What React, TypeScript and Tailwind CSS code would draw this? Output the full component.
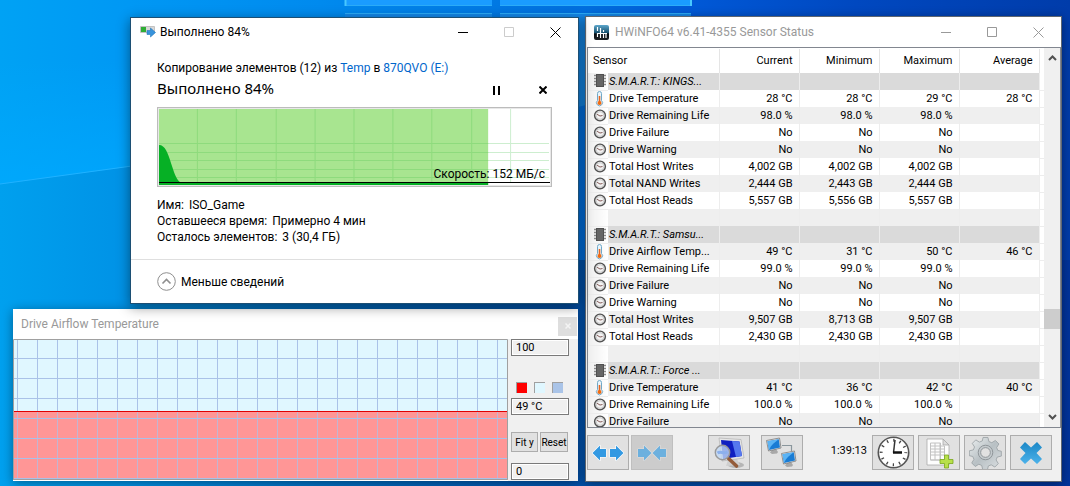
import type { ReactNode } from 'react';

type Row = {
  kind: 'group' | 'temp' | 'clock' | 'blank';
  name?: string;
  values?: string[];
};

const rows: Row[] = [
  { kind: 'group', name: 'S.M.A.R.T.: KINGS...' },
  { kind: 'temp', name: 'Drive Temperature', values: ['28 °C', '28 °C', '29 °C', '28 °C'] },
  { kind: 'clock', name: 'Drive Remaining Life', values: ['98.0 %', '98.0 %', '98.0 %'] },
  { kind: 'clock', name: 'Drive Failure', values: ['No', 'No', 'No'] },
  { kind: 'clock', name: 'Drive Warning', values: ['No', 'No', 'No'] },
  { kind: 'clock', name: 'Total Host Writes', values: ['4,002 GB', '4,002 GB', '4,002 GB'] },
  { kind: 'clock', name: 'Total NAND Writes', values: ['2,444 GB', '2,443 GB', '2,444 GB'] },
  { kind: 'clock', name: 'Total Host Reads', values: ['5,557 GB', '5,556 GB', '5,557 GB'] },
  { kind: 'blank' },
  { kind: 'group', name: 'S.M.A.R.T.: Samsu...' },
  { kind: 'temp', name: 'Drive Airflow Temp...', values: ['49 °C', '31 °C', '50 °C', '46 °C'] },
  { kind: 'clock', name: 'Drive Remaining Life', values: ['99.0 %', '99.0 %', '99.0 %'] },
  { kind: 'clock', name: 'Drive Failure', values: ['No', 'No', 'No'] },
  { kind: 'clock', name: 'Drive Warning', values: ['No', 'No', 'No'] },
  { kind: 'clock', name: 'Total Host Writes', values: ['9,507 GB', '8,713 GB', '9,507 GB'] },
  { kind: 'clock', name: 'Total Host Reads', values: ['2,430 GB', '2,430 GB', '2,430 GB'] },
  { kind: 'blank' },
  { kind: 'group', name: 'S.M.A.R.T.: Force ...' },
  { kind: 'temp', name: 'Drive Temperature', values: ['41 °C', '36 °C', '42 °C', '40 °C'] },
  { kind: 'clock', name: 'Drive Remaining Life', values: ['100.0 %', '100.0 %', '100.0 %'] },
  { kind: 'clock', name: 'Drive Failure', values: ['No', 'No', 'No'] },
];

const columns = ['Current', 'Minimum', 'Maximum', 'Average'];

const Wallpaper = () => (
  <svg className="absolute inset-0 h-full w-full" viewBox="0 0 1070 486" preserveAspectRatio="none" aria-hidden="true">
    <defs>
      <linearGradient id="sky" x1="0" y1="0" x2="1" y2="0">
        <stop offset="0" stopColor="#00a2f4" />
        <stop offset="0.12" stopColor="#0098f4" />
        <stop offset="0.3" stopColor="#008aee" />
        <stop offset="0.45" stopColor="#007ae4" />
        <stop offset="0.55" stopColor="#006ede" />
        <stop offset="0.65" stopColor="#0058d6" />
        <stop offset="0.8" stopColor="#0048c0" />
        <stop offset="1" stopColor="#003caa" />
      </linearGradient>
      <linearGradient id="floor" x1="0" y1="0" x2="1" y2="0">
        <stop offset="0" stopColor="#00a0ee" />
        <stop offset="0.12" stopColor="#0092e6" />
        <stop offset="0.3" stopColor="#0070c4" />
        <stop offset="0.54" stopColor="#0052ac" />
        <stop offset="1" stopColor="#00349c" />
      </linearGradient>
      <linearGradient id="beam" x1="0" y1="0" x2="0" y2="1">
        <stop offset="0" stopColor="#00aaff" stopOpacity="0" />
        <stop offset="1" stopColor="#00aaff" stopOpacity="0.7" />
      </linearGradient>
    </defs>
    <path d="M0 0h1070v486H0z" fill="url(#sky)" />
    <path d="M0 60h180v100L0 184z" fill="url(#beam)" />
    <path d="M0 184 180 160 500 260h570v226H0z" fill="url(#floor)" />
    <path d="m0 184 132-18" stroke="#20b2ff" />
    <path d="M345 0h147v6H345zM500 0h191v6H500z" fill="#1a9cff" />
    <path d="M345 13h147v6H345zM500 13h191v6H500z" fill="#1488ea" />
    <path d="M345 5.500h147M500 5.500h191M345 13.500h147M500 13.500h191" stroke="#2cacf8" />
    <path d="M345.500 0v6M691 0v6" stroke="#48c8ff" strokeWidth="2" />
    <path d="M578 17h8v88l-8 2z" fill="#1384e2" />
  </svg>
);

const WindowButtons = ({ muted = false }: { muted?: boolean }) => (
  <div className={`flex ${muted ? 'text-[#999999]' : 'text-black'}`}>
    <button type="button" aria-label="Minimize" className="flex h-7 w-[46px] items-center justify-center">
      <svg width="11" height="11" stroke="currentColor" fill="none"><path d="M0 5.5h10" /></svg>
    </button>
    <button
      type="button"
      aria-label="Maximize"
      className={`flex h-7 w-[46px] items-center justify-center ${muted ? '' : 'text-[#cccccc]'}`}
    >
      <svg width="11" height="11" stroke="currentColor" fill="none"><path d="M.5.5h9v9h-9z" /></svg>
    </button>
    <button type="button" aria-label="Close" className="flex h-7 w-[46px] items-center justify-center">
      <svg width="11" height="11" stroke="currentColor" fill="none"><path d="m.5.5 10 10m0-10-10 10" /></svg>
    </button>
  </div>
);

const SpeedChart = () => (
  <div className="relative border border-[#bcbcbc] bg-[#e8e8e8] p-px">
    <svg className="block h-[76px] w-full bg-white" viewBox="0 0 392 76" preserveAspectRatio="none" aria-hidden="true">
      <path
        d="M38.5 0v73M77.5 0v73M117.5 0v73M156.5 0v73M195.5 0v73M234.5 0v73M273.5 0v73M313.5 0v73M352.5 0v73M0 34.5h391M0 43.5h391M0 51.5h391M0 60.5h391M0 68.5h391"
        stroke="#cdeecf"
      />
      <path d="M0 0h330v76H0z" fill="#a8e590" />
      <path
        d="M38.5 0v73M77.5 0v73M117.5 0v73M156.5 0v73M195.5 0v73M234.5 0v73M273.5 0v73M313.5 0v73M0 34.5h330M0 43.5h330M0 51.5h330M0 60.5h330M0 68.5h330"
        stroke="#8edb7c"
      />
      <path d="M0 36c6 0 9 8 12 18 3 9 5 16 9 19H0z" fill="#06b025" />
      <path d="M0 73h330v3H0z" fill="#06b025" />
      <path d="M0 73.500h392" stroke="#000" />
    </svg>
    <span className="absolute right-1.5 bottom-1 text-xs leading-4">Скорость: 152 МБ/с</span>
  </div>
);

const CopyDialog = () => (
  <section className="absolute top-[17px] left-[130px] flex w-[449px] flex-col border border-[#1c4f74] bg-white font-[Roboto,'Noto_Sans',sans-serif] text-xs text-black shadow-[0_3px_12px_rgba(0,0,0,0.45)]">
    <header className="flex h-7 items-center">
      <svg className="ml-[9px]" width="16" height="12" aria-hidden="true">
        <path d="M.5.5h14v6H.5z" fill="#d8d8d8" stroke="#c2c2c2" />
        <path d="M1 1h5v5H1z" fill="#2fae35" />
        <path d="M7 4.500h3.500V2l5 4.500-5 4.500V8.500H7z" fill="#3793dc" stroke="#2277bb" strokeWidth=".6" />
      </svg>
      <h1 className="ml-1 grow text-xs">Выполнено 84%</h1>
      <WindowButtons />
    </header>

    <div className="px-[26px] pt-3.5">
      <p className="leading-4">
        Копирование элементов (12) из{' '}
        <a href="#temp" className="text-[#0066cc]">Temp</a> в <a href="#drive" className="text-[#0066cc]">870QVO (E:)</a>
      </p>
      <div className="flex h-7 items-center">
        <h2 className="grow self-start font-['Noto_Sans',sans-serif] text-[15px] leading-6">Выполнено 84%</h2>
        <button type="button" aria-label="Пауза" className="flex h-6 w-[46px] items-center justify-center">
          <svg width="8" height="9" aria-hidden="true"><path d="M0 0h2v9H0zM5 0h2v9H5z" /></svg>
        </button>
        <button type="button" aria-label="Отмена" className="mr-[-14px] flex h-6 w-[46px] items-center justify-center">
          <svg width="8" height="8" aria-hidden="true"><path d="m.5.5 7 7m0-7-7 7" stroke="#000" strokeWidth="2" /></svg>
        </button>
      </div>
      <div className="mt-[3px]">
        <SpeedChart />
      </div>
      <dl className="mt-2.5 leading-4">
        <div className="flex gap-[5px]"><dt>Имя:</dt><dd>ISO_Game</dd></div>
        <div className="flex gap-[5px]"><dt>Оставшееся время:</dt><dd>Примерно 4 мин</dd></div>
        <div className="flex gap-[5px]"><dt>Осталось элементов:</dt><dd>3 (30,4 ГБ)</dd></div>
      </dl>
    </div>

    <footer className="mt-3.5 border-t border-[#dfdfdf] px-[26px] py-3">
      <button type="button" className="flex items-center gap-[5px]">
        <svg width="19" height="19" fill="none" stroke="#8e8e8e" aria-hidden="true">
          <circle cx="9.500" cy="9.500" r="8.800" />
          <path d="m5.500 11.500 4-4 4 4" strokeWidth="1.600" />
        </svg>
        Меньше сведений
      </button>
    </footer>
  </section>
);

const fieldClass = 'h-[17px] w-full border border-[#7a7a7a] bg-[#f0f0f0] px-1 shadow-[inset_0_0_0_1px_#fff]';

const AirflowWindow = () => (
  <section className="absolute top-[309px] left-[13px] w-[565px] bg-[#f0f0f0] font-[Roboto,'Noto_Sans',sans-serif] text-[11px] text-black shadow-[0_2px_10px_rgba(0,0,0,0.4)]">
    <header className="flex h-[30px] items-center justify-between bg-white pl-2">
      <h1 className="text-xs text-[#999999]">Drive Airflow Temperature</h1>
      <button type="button" aria-label="Close" className="mt-1 mr-px flex h-[19px] w-[19px] items-center justify-center bg-[#dedede] text-[#f4f4f4]">
        <svg width="6" height="6" stroke="currentColor" strokeWidth="1.500" aria-hidden="true"><path d="m.5.5 5 5m0-5-5 5" /></svg>
      </button>
    </header>
    <div className="flex">
      <svg className="block h-[142px] min-w-0 grow" viewBox="0 0 495 142" preserveAspectRatio="none" aria-hidden="true">
        <defs>
          <pattern id="grid-top" x="4" y="19" width="20" height="20" patternUnits="userSpaceOnUse">
            <path d="M.5 0v20M0 .5h20" stroke="#aac2e8" />
          </pattern>
          <pattern id="grid-low" x="4" y="19" width="20" height="20" patternUnits="userSpaceOnUse">
            <path d="M.5 0v20" stroke="#c4b4d0" />
            <path d="M0 .5h20" stroke="#a9c0e8" />
          </pattern>
        </defs>
        <path d="M0 0h495v142H0z" fill="#e0f7ff" />
        <path d="M0 0h495v72H0z" fill="url(#grid-top)" />
        <path d="M0 72h495v69H0z" fill="#ff9696" />
        <path d="M0 72h495v69H0z" fill="url(#grid-low)" />
        <path d="M0 72.500h495" stroke="#e00000" />
        <path d="M.5 141V.5h494v140H0" fill="none" stroke="#a0a0a0" />
        <path d="M0 141.500h495" stroke="#fff" />
      </svg>
      <div className="flex w-[70px] shrink-0 flex-col pr-[9px] pl-[3px]">
        <input aria-label="Maximum value" defaultValue="100" className={fieldClass} />
        <div className="mt-[26px] flex gap-[7px] pl-[5px]">
          <button type="button" aria-label="Line colour" className="size-[11px] border-t border-l border-[#a0a0a0] bg-[#ff0000]" />
          <button type="button" aria-label="Background colour" className="size-[11px] border-t border-l border-[#a0a0a0] bg-[#e0f7ff]" />
          <button type="button" aria-label="Grid colour" className="size-[11px] border-t border-l border-[#a0a0a0] bg-[#aac4e8]" />
        </div>
        <input aria-label="Current value" defaultValue="49 °C" className={`mt-[5px] ${fieldClass}`} />
        <div className="mt-[17px] flex gap-0.5">
          <button type="button" className="h-5 w-[27px] border border-[#adadad] bg-[#e1e1e1] text-[10px] whitespace-nowrap">Fit y</button>
          <button type="button" className="h-5 w-7 border border-[#adadad] bg-[#e1e1e1] text-[10px] whitespace-nowrap">
            <span className="-mx-1">Reset</span>
          </button>
        </div>
        <input aria-label="Minimum value" defaultValue="0" className={`mt-[11px] ${fieldClass}`} />
      </div>
    </div>
  </section>
);

const RowIcon = ({ kind }: { kind: Row['kind'] }) => {
  if (kind === 'blank') return null;
  return (
    <svg width="14" height="16" viewBox="0 0 14 16" className="block" aria-hidden="true">
      {kind === 'group' && (
        <>
          <path d="M1 2.500h12M1 5.500h12M1 8.500h12M1 11.500h12" stroke="#8a8a8a" strokeWidth="1.500" />
          <path d="M3 1h8v13H3z" fill="#505050" />
          <path d="M4 2h6v11H4z" fill="#666" />
        </>
      )}
      {kind === 'temp' && (
        <>
          <path d="M4.500 2.500a1.500 1.500 0 0 1 4 0v7a3 3 0 1 1-4 0z" fill="#e8f3fa" stroke="#70a8c8" />
          <path d="M6.500 5v7" stroke="#e8641e" strokeWidth="1.600" />
          <circle cx="6.500" cy="12" r="2" fill="#f06a10" />
        </>
      )}
      {kind === 'clock' && (
        <>
          <circle cx="7" cy="7.500" r="5.400" fill="#e8e8e8" stroke="#505050" strokeWidth="1.400" />
          <circle cx="7" cy="7.500" r="3.800" fill="#f3f3f3" stroke="#b4b4b4" strokeWidth=".6" />
          <path d="M4 6.300 7 8 9.500 7.500" fill="none" stroke="#774c48" strokeWidth=".9" />
        </>
      )}
    </svg>
  );
};

const rowBackground = (row: Row, index: number) => {
  if (row.kind === 'group') return 'bg-[#dadada]';
  return index % 2 === 0 ? 'bg-[#efefef]' : 'bg-white';
};

const SensorTable = () => (
  <div className="flex h-[381px] overflow-hidden border border-[#828790] bg-white">
    <div className="min-w-0 grow overflow-hidden pt-px">
      <table className="w-full table-fixed border-collapse">
        <colgroup>
          <col className="w-5" />
          <col className="w-[111px]" />
          <col className="w-20" />
          <col className="w-20" />
          <col className="w-20" />
          <col className="w-20" />
          <col />
        </colgroup>
        <thead>
          <tr className="h-6">
            <th colSpan={2} scope="col" className="border-r border-[#e5e5e5] p-0 pl-[5px] text-left font-normal">Sensor</th>
            {columns.map((column) => (
              <th key={column} scope="col" className="border-r border-[#e5e5e5] p-0 pr-1.5 text-right font-normal">{column}</th>
            ))}
            <td />
          </tr>
        </thead>
        <tbody>
          {rows.map((row, index) => (
            <tr key={index} className="h-[17px]">
              <td className="border-b border-[#ececec] bg-linear-to-r from-[#eeeeee] to-white p-0 pl-[5px]"><RowIcon kind={row.kind} /></td>
              <td className={`${rowBackground(row, index)} overflow-hidden border-r border-[#ededed] p-0 pl-px leading-4 whitespace-nowrap ${row.kind === 'group' ? 'italic' : ''}`}>
                {row.name}
              </td>
              {columns.map((column, i) => (
                <td key={column} className={`${rowBackground(row, index)} border-r border-[#ededed] p-0 pr-1.5 text-right leading-4 whitespace-nowrap`}>
                  {row.values?.[i]}
                </td>
              ))}
              <td className="border-b border-[#ededed] p-0" />
            </tr>
          ))}
        </tbody>
      </table>
    </div>
    <div className="flex w-4 shrink-0 flex-col items-center justify-between bg-[#f0f0f0]">
      <button type="button" aria-label="Scroll up" className="flex h-5 w-4 items-center justify-center">
        <svg width="9" height="6" fill="none" stroke="#505050" strokeWidth="2"><path d="m1 5 3.500-3.500L8 5" /></svg>
      </button>
      <div className="mt-[163px] h-5 w-4 bg-[#cdcdcd]" />
      <button type="button" aria-label="Scroll down" className="flex h-5 w-4 items-center justify-center">
        <svg width="9" height="6" fill="none" stroke="#505050" strokeWidth="2"><path d="m1 1 3.500 3.500L8 1" /></svg>
      </button>
    </div>
  </div>
);

const ToolButton = ({ label, disabled = false, children }: { label: string; disabled?: boolean; children: ReactNode }) => (
  <button
    type="button"
    aria-label={label}
    disabled={disabled}
    className={`flex h-[35px] w-[42px] items-center justify-center border ${disabled ? 'border-[#bfbfbf] bg-[#cccccc]' : 'border-[#adadad] bg-[#e1e1e1]'}`}
  >
    {children}
  </button>
);

const MonitorShape = () => (
  <>
    <path d="m6 12 4-1 2 3-1 1.500-5 .5-2-1.500z" fill="#a8a8a8" />
    <path d="m.5 2.500 13-2.500 1.500 10L2.500 13z" fill="#e8e8e8" stroke="#6c6c6c" strokeWidth=".7" />
    <path d="m1.500 3.300 11.300-2.100L14 9.500 3 11.900z" fill="#1a7cd4" />
    <path d="m1.500 3.300 11.300-2.100C9 4 5 7 3 11.900z" fill="#5cb4f4" />
  </>
);

const SensorToolbar = () => (
  <footer className="flex h-[53px] items-start pt-[7px] pr-[9px]">
    <div className="flex gap-0.5">
      <ToolButton label="Expand">
        <svg width="34" height="20" fill="#3399e2" stroke="#fff" strokeWidth="1.200" strokeLinejoin="round" className="[paint-order:stroke]">
          <path d="m1.500 10 7.500-7.500V6h6v8H9v3.500zM32.500 10 25 2.500V6h-6v8h6v3.500z" />
        </svg>
      </ToolButton>
      <ToolButton label="Collapse" disabled>
        <svg width="34" height="20" fill="#6cb0de" stroke="#ddd" strokeWidth="1.200" strokeLinejoin="round" className="[paint-order:stroke]">
          <path d="M16.500 10 9 2.500V6H3v8h6v3.500zM17.500 10 25 2.500V6h6v8h-6v3.500z" />
        </svg>
      </ToolButton>
    </div>
    <div className="ml-[35px] flex gap-[11px]">
      <ToolButton label="Summary">
        <svg width="34" height="33" viewBox="0 0 34 33">
          <ellipse cx="24" cy="29" rx="8" ry="3" fill="#b5b5b5" />
          <path d="m16 24 9-1 3 6-14 1z" fill="#cfcfcf" />
          <path d="m7 2 22 1.500L32 22 10 25z" fill="#e6e6e6" stroke="#aaa" strokeWidth=".6" />
          <path d="m9 4 18.500 1.500L30 20l-19 3z" fill="#101fc0" />
          <path d="m20 5 7.500.5L30 20l-6 1z" fill="#5578ee" />
          <path d="m16 22 8.500 8" stroke="#945c3a" strokeWidth="3.600" strokeLinecap="round" />
          <circle cx="10.500" cy="16.500" r="7.200" fill="#c0d8f4" fillOpacity=".8" stroke="#999" strokeWidth="1.400" />
          <path d="M5.500 17c3-2 6 1 10-1" stroke="#8cb0ec" strokeWidth="3" fill="none" />
        </svg>
      </ToolButton>
      <ToolButton label="Network">
        <svg width="34" height="32" viewBox="0 0 34 32">
          <path d="M17 8.500h9.500V14" stroke="#8a969c" strokeWidth="1.200" fill="none" />
          <g transform="translate(1 1)"><MonitorShape /></g>
          <g transform="translate(16 14)"><MonitorShape /></g>
        </svg>
      </ToolButton>
    </div>
    <time className="ml-auto self-start pt-2 pr-[5px] leading-4">1:39:13</time>
    <div className="flex gap-1">
      <ToolButton label="Reset clock">
        <svg width="33" height="33" viewBox="0 0 33 33" fill="none">
          <circle cx="16.500" cy="16.500" r="15.200" fill="#fff" stroke="#555" strokeWidth="1.600" />
          <circle cx="16.500" cy="16.500" r="12.300" stroke="#444" strokeWidth="3" strokeDasharray="1.300 5.140" strokeDashoffset=".65" />
          <path d="M16.500 16.500 18 4" stroke="#333" strokeWidth="1.500" />
          <path d="M16 16.500h9" stroke="#111" strokeWidth="2.500" />
        </svg>
      </ToolButton>
      <ToolButton label="Log">
        <svg width="30" height="32" viewBox="0 0 30 32">
          <path d="M3 2h16l6 6v20H3z" fill="#fdfdfd" stroke="#aaa" strokeWidth=".8" />
          <path d="M19 2v6h6z" fill="#ddd" stroke="#aaa" strokeWidth=".8" />
          <path d="M6.500 6h10v17h-10zM6.500 9h14v14h-14M6.500 12h14M6.500 15h14M6.500 18h14M11 6v17M16 6v17" fill="none" stroke="#c2c2c2" />
          <path d="M20.500 18h4v4.500H29v4h-4.500V31h-4v-4.500H16v-4h4.500z" fill="#b8e04b" stroke="#79a71c" strokeWidth=".8" />
        </svg>
      </ToolButton>
      <ToolButton label="Settings">
        <svg width="33" height="33" viewBox="-17 -17 34 34">
          <defs>
            <linearGradient id="steel" x1="0" y1="0" x2="1" y2="1">
              <stop offset="0" stopColor="#eef1f2" />
              <stop offset="0.5" stopColor="#b8c0c4" />
              <stop offset="1" stopColor="#dce0e2" />
            </linearGradient>
          </defs>
          <path
            d="M-2.500-15.500h5l1 4.200 3 1.200 3.700-2.300 3.600 3.600-2.300 3.700 1.200 3 3.600.8v5l-4.200 1-1.200 3 2.300 3.700-3.600 3.600-3.700-2.300-3 1.200-.8 3.600h-5l-1-4.200-3-1.200-3.700 2.300-3.600-3.600 2.300-3.700-1.200-3-3.600-.8v-5l4.200-1 1.200-3-2.300-3.700 3.600-3.600 3.700 2.300 3-1.200z"
            fill="url(#steel)"
            stroke="#949b9f"
            strokeWidth=".8"
          />
          <circle r="7.500" fill="#c4cacd" stroke="#8d9498" />
          <circle r="5" fill="#e1e1e1" stroke="#8d9498" />
        </svg>
      </ToolButton>
      <ToolButton label="Close sensors">
        <svg width="26" height="26" viewBox="0 0 26 26">
          <defs>
            <linearGradient id="cross" x1="0" y1="0" x2="0" y2="1">
              <stop offset="0" stopColor="#1b87c6" />
              <stop offset="1" stopColor="#4cb2ea" />
            </linearGradient>
          </defs>
          <path d="m7 2 6 5.500L19 2l5 5.500-5.500 5.500 5.500 6-5 5-6-5.500L7 24l-5-5 5.500-6L2 7.500z" fill="url(#cross)" />
        </svg>
      </ToolButton>
    </div>
  </footer>
);

const SensorWindow = () => (
  <section className="absolute top-4 left-[585px] w-[477px] border border-[#5e6670] bg-[#f0f0f0] pl-px font-[Roboto,'Noto_Sans',sans-serif] text-[11px] text-black shadow-[0_2px_10px_rgba(0,0,0,0.4)]">
    <header className="flex h-[30px] items-center bg-white">
      <svg className="ml-[7px]" width="15" height="15" aria-hidden="true">
        <defs>
          <linearGradient id="logo" x1="0" y1="0" x2="0" y2="1">
            <stop offset="0" stopColor="#5da7cc" />
            <stop offset="0.5" stopColor="#1b5370" />
            <stop offset="0.6" stopColor="#080d12" />
            <stop offset="1" stopColor="#202224" />
          </linearGradient>
        </defs>
        <rect width="15" height="15" rx="2" fill="url(#logo)" />
        <path d="M3.500 2v4M6.500 3v5M9.500 5v2M3 8.500h10M3.500 8v4M6.500 9v4M9.500 8v5M12 8v5" stroke="#fff" strokeWidth="1.200" />
      </svg>
      <h1 className="ml-1.5 grow text-xs text-[#999999]">HWiNFO64 v6.41-4355 Sensor Status</h1>
      <WindowButtons muted />
    </header>
    <SensorTable />
    <SensorToolbar />
  </section>
);

export default function App() {
  return (
    <main className="relative h-screen overflow-hidden bg-[#0078d7]">
      <Wallpaper />
      <SensorWindow />
      <AirflowWindow />
      <CopyDialog />
    </main>
  );
}
